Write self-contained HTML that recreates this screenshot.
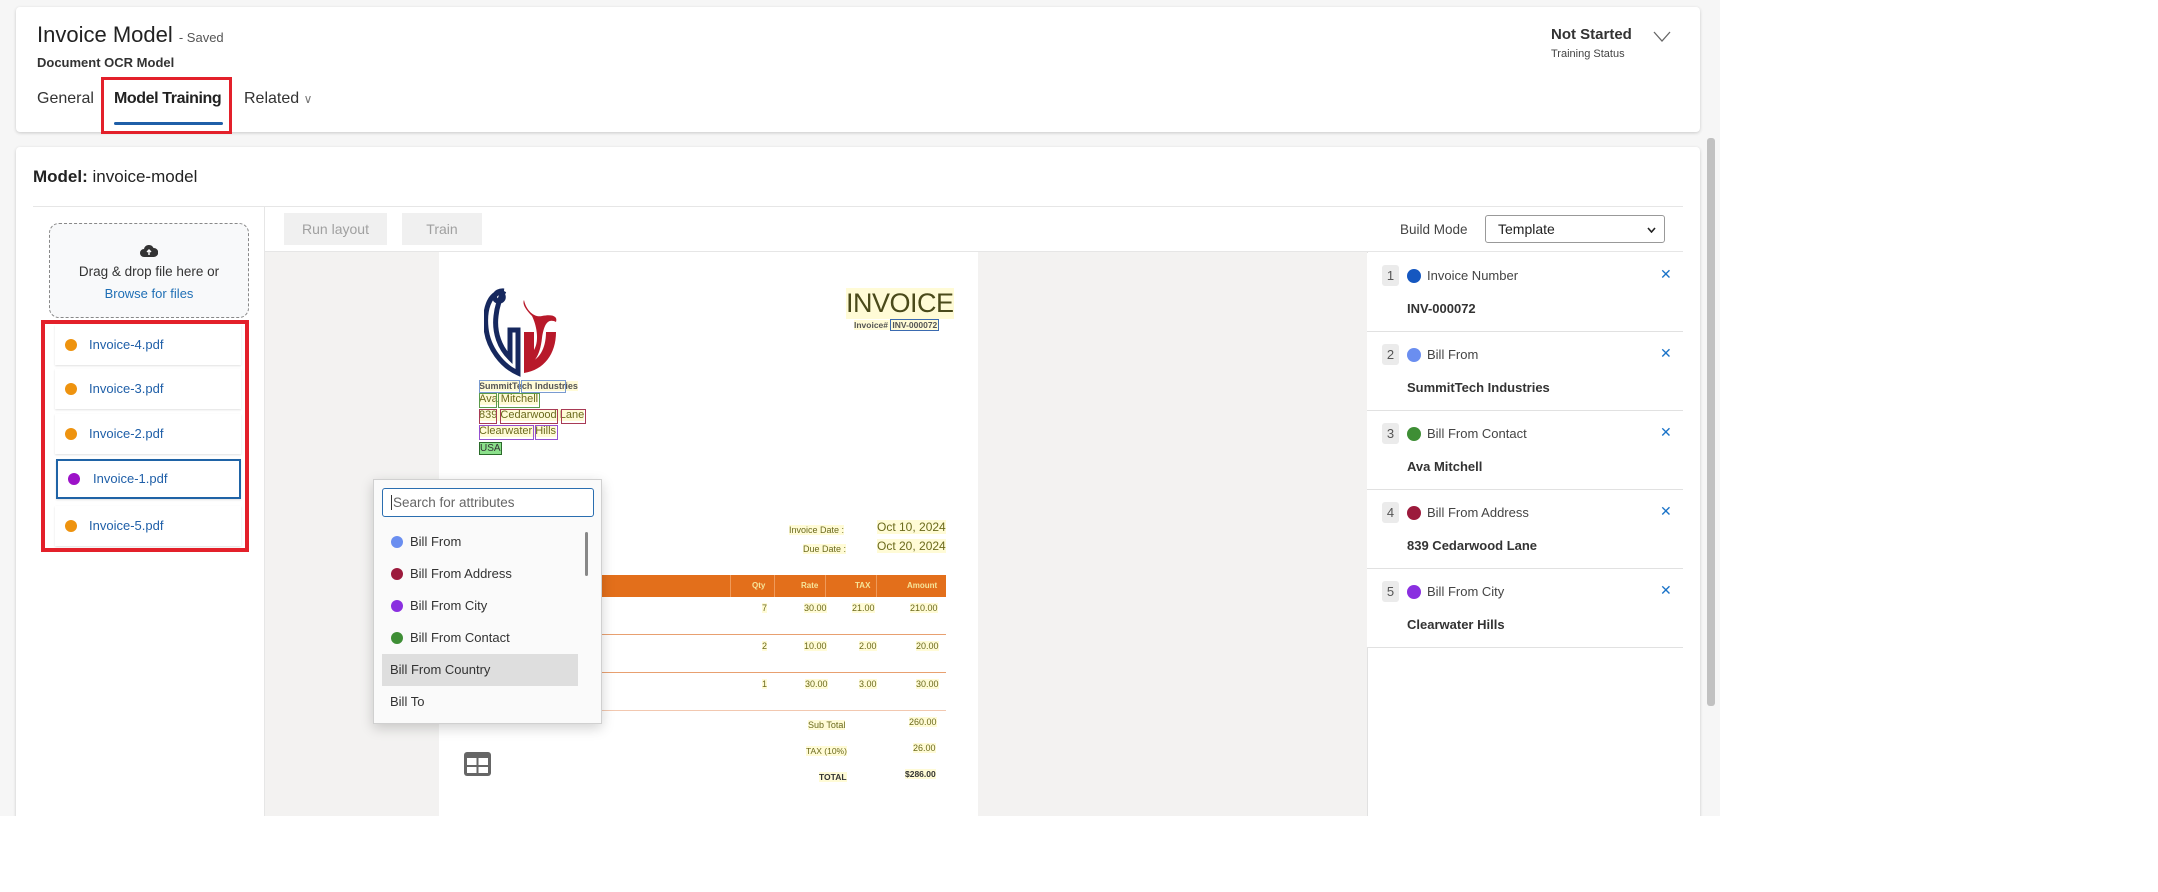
<!DOCTYPE html>
<html><head><meta charset="utf-8"><style>
*{box-sizing:border-box;margin:0;padding:0}
body{width:2158px;height:892px;background:#fff;font-family:"Liberation Sans",sans-serif;position:relative;overflow:hidden;color:#242424}
.a{position:absolute}
#clip{position:absolute;left:0;top:0;width:1720px;height:816px;overflow:hidden;background:#f6f6f6}
.card{background:#fff;border-radius:4px;box-shadow:0 1px 3px rgba(0,0,0,.18)}
.fi{position:absolute;left:55px;width:186px;height:40px;background:#fff;box-shadow:0 1px 2px rgba(0,0,0,.12);font-size:13px;color:#1f5fa8;line-height:40px;padding-left:34px}
.fi i{position:absolute;left:10px;top:14px;width:12px;height:12px;border-radius:50%;background:#ee930f}
.row{position:absolute;left:1367px;width:316px;height:79px;border-bottom:1px solid #e1e1e1;background:#fff}
.row .n{position:absolute;left:15px;top:12px;width:17px;height:21px;background:#ebebeb;border-radius:3px;font-size:13px;text-align:center;line-height:21px;color:#555}
.row .d{position:absolute;left:40px;top:16px;width:14px;height:14px;border-radius:50%}
.row .l{position:absolute;left:60px;top:15px;font-size:13px;color:#444}
.row .v{position:absolute;left:40px;top:48px;font-size:13px;font-weight:bold;color:#333}
.row .x{position:absolute;left:293px;top:13px;font-size:14px;color:#1a73c8}
.dd{position:absolute;left:382px;width:196px;height:32px;font-size:13px;color:#333;line-height:32px;padding-left:28px}
.dd i{position:absolute;left:9px;top:10px;width:12px;height:12px;border-radius:50%}
.t{position:absolute;color:#6b6a1c;font-family:"Liberation Sans",sans-serif;background:#fffbd6}
.bx{position:absolute;border:1.5px solid;height:13px}
</style></head><body>
<div id="clip">
<div class="a" style="left:1707px;top:138px;width:8px;height:568px;background:#c1c1c1;border-radius:3px"></div>
<!-- top card -->
<div class="a card" style="left:16px;top:7px;width:1684px;height:125px"></div>
<div class="a" style="left:37px;top:22px;font-size:22px;color:#222">Invoice Model <span style="font-size:13px;color:#555">- Saved</span></div>
<div class="a" style="left:37px;top:55px;font-size:13px;font-weight:bold;color:#333">Document OCR Model</div>
<div class="a" style="left:37px;top:90px;font-size:16px;color:#333">General</div>
<div class="a" style="left:114px;top:90px;font-size:16px;color:#222;font-weight:bold;letter-spacing:-.4px">Model Training</div>
<div class="a" style="left:244px;top:90px;font-size:16px;color:#333">Related <span style="font-size:12px;color:#777">&#8744;</span></div>
<div class="a" style="left:114px;top:122px;width:109px;height:3px;background:#1f5fa8;border-radius:2px"></div>
<div class="a" style="left:101px;top:77px;width:131px;height:57px;border:3px solid #e3202a"></div>
<div class="a" style="left:1551px;top:26px;font-size:15px;font-weight:bold;color:#333">Not Started</div>
<div class="a" style="left:1551px;top:48px;font-size:11px;color:#444">Training Status</div>
<svg class="a" style="left:1652px;top:30px" width="20" height="14"><path d="M2 2 L10 11 L18 2" fill="none" stroke="#666" stroke-width="1.3"/></svg>
<!-- main card -->
<div class="a card" style="left:16px;top:147px;width:1684px;height:720px"></div>
<div class="a" style="left:33px;top:167px;font-size:17px;color:#222"><span style="font-weight:600">Model:</span> <span style="font-size:17px">invoice-model</span></div>
<div class="a" style="left:33px;top:206px;width:1650px;height:1px;background:#e6e6e6"></div>
<div class="a" style="left:264px;top:207px;width:1px;height:610px;background:#e6e6e6"></div>
<!-- dropzone -->
<div class="a" style="left:49px;top:223px;width:200px;height:95px;border:1px dashed #888;border-radius:10px;background:#f8f9fa"></div>
<svg class="a" style="left:140px;top:244px" width="18" height="14" viewBox="0 0 18 14"><path d="M4 13 A4 4 0 0 1 4 5 A5 5 0 0 1 13.5 4 A4.5 4.5 0 0 1 14 13 Z" fill="#333"/><path d="M9 11 V6 M7 8 L9 6 L11 8" stroke="#fff" stroke-width="1.4" fill="none"/></svg>
<div class="a" style="left:49px;top:264px;width:200px;text-align:center;font-size:13.5px;color:#333">Drag &amp; drop file here or</div>
<div class="a" style="left:49px;top:286px;width:200px;text-align:center;font-size:13px;color:#1f6fb5">Browse for files</div>
<div class="fi" style="top:325px"><i></i>Invoice-4.pdf</div>
<div class="fi" style="top:369px"><i></i>Invoice-3.pdf</div>
<div class="fi" style="top:414px"><i></i>Invoice-2.pdf</div>
<div class="fi" style="top:459px;border:2px solid #1f63a6;line-height:36px;left:56px;width:185px;padding-left:35px"><i style="background:#9c12c8;top:12px"></i>Invoice-1.pdf</div>
<div class="fi" style="top:506px"><i></i>Invoice-5.pdf</div>
<div class="a" style="left:41px;top:320px;width:208px;height:232px;border:4px solid #e3202a"></div>
<!-- toolbar -->
<div class="a" style="left:284px;top:213px;width:103px;height:32px;background:#f0f0f0;font-size:14px;color:#a0a0a0;text-align:center;line-height:32px">Run layout</div>
<div class="a" style="left:402px;top:213px;width:80px;height:32px;background:#f0f0f0;font-size:14px;color:#a0a0a0;text-align:center;line-height:32px">Train</div>
<div class="a" style="left:1400px;top:222px;font-size:13.5px;color:#444">Build Mode</div>
<div class="a" style="left:1485px;top:215px;width:180px;height:28px;border:1px solid #999;border-radius:3px;font-size:14px;color:#222;padding:5px 0 0 12px">Template<svg style="position:absolute;right:8px;top:11px" width="9" height="6"><path d="M1 1 L4.5 5 L8 1" stroke="#222" stroke-width="1.6" fill="none"/></svg></div>
<div class="a" style="left:265px;top:251px;width:1418px;height:1px;background:#e6e6e6"></div>
<!-- viewer -->
<div class="a" style="left:265px;top:252px;width:1102px;height:564px;background:#f3f2f1"></div>
<div class="a" style="left:439px;top:252px;width:539px;height:564px;background:#fff"></div>
<!-- logo -->
<svg class="a" style="left:484px;top:288px" width="90" height="90" viewBox="0 0 90 90">
<path d="M20 3 C10 2 8 12 14 13 C22 14 20 3 14 5 C6 8 0 20 2 40 C4 60 18 78 34 85 L34 42 L26 42 L26 70 C16 60 10 45 12 28 C13 18 16 10 20 3" fill="none" stroke="#16285e" stroke-width="5"/>
<path d="M40 12 C42 22 50 30 58 28 C68 26 74 28 72 34 C64 30 60 36 58 50 C56 68 50 76 40 80 L40 44 L50 44 L50 62 C56 52 52 36 48 28 C42 22 38 16 40 12 Z" fill="#b8192a"/>
<path d="M40 44 L40 85 C60 82 72 66 72 44 L62 44 C62 62 54 72 46 74 L46 44 Z" fill="#b8192a"/>
</svg>
<!-- address boxes -->
<div class="t" style="left:479px;top:381px;font-size:9px;font-weight:bold;color:#555">SummitTech Industries</div>
<div class="bx" style="left:479px;top:380px;width:41px;border-color:#7a9bd0"></div><div class="bx" style="left:521px;top:380px;width:45px;border-color:#7a9bd0"></div>
<div class="t" style="left:479px;top:393px;font-size:11px">Ava Mitchell</div>
<div class="bx" style="left:479px;top:393px;width:18px;height:15px;border-color:#5a9a4a"></div><div class="bx" style="left:498px;top:393px;width:42px;height:15px;border-color:#5a9a4a"></div>
<div class="t" style="left:479px;top:409px;font-size:11px">839 Cedarwood Lane</div>
<div class="bx" style="left:479px;top:409px;width:18px;height:15px;border-color:#a83a55"></div><div class="bx" style="left:500px;top:409px;width:58px;height:15px;border-color:#a83a55"></div><div class="bx" style="left:561px;top:409px;width:25px;height:15px;border-color:#a83a55"></div>
<div class="t" style="left:479px;top:425px;font-size:11px">Clearwater Hills</div>
<div class="bx" style="left:479px;top:425px;width:55px;height:15px;border-color:#9550d0"></div><div class="bx" style="left:535px;top:425px;width:23px;height:15px;border-color:#9550d0"></div>
<div class="t" style="left:479px;top:442px;font-size:10px;background:#8be08b;color:#333;border:1px solid #2a6a2a">USA</div>
<div class="t" style="left:846px;top:288px;font-size:27px;color:#4a4a1a;letter-spacing:-.5px">INVOICE</div>
<div class="t" style="left:854px;top:320px;font-size:8.5px;font-weight:bold;color:#555">Invoice# <span style="border:1.5px solid #3a6ab0;padding:0 1px">INV-000072</span></div>
<div class="t" style="left:789px;top:525px;font-size:9px">Invoice Date :</div>
<div class="t" style="left:803px;top:544px;font-size:9px">Due Date :</div>
<div class="t" style="left:877px;top:520px;font-size:12px">Oct 10, 2024</div>
<div class="t" style="left:877px;top:539px;font-size:12px">Oct 20, 2024</div>
<div class="a" style="left:439px;top:575px;width:507px;height:22px;background:#e36f1b"></div>
<div class="a" style="left:730px;top:575px;width:1px;height:22px;background:#ef9a5a"></div>
<div class="a" style="left:774px;top:575px;width:1px;height:22px;background:#ef9a5a"></div>
<div class="a" style="left:825px;top:575px;width:1px;height:22px;background:#ef9a5a"></div>
<div class="a" style="left:876px;top:575px;width:1px;height:22px;background:#ef9a5a"></div>
<div class="a" style="left:752px;top:581px;font-size:8px;color:#f6e59a;font-weight:bold">Qty</div>
<div class="a" style="left:801px;top:581px;font-size:8px;color:#f6e59a;font-weight:bold">Rate</div>
<div class="a" style="left:855px;top:581px;font-size:8px;color:#f6e59a;font-weight:bold">TAX</div>
<div class="a" style="left:907px;top:581px;font-size:8px;color:#f6e59a;font-weight:bold">Amount</div>
<div class="a" style="left:439px;top:634px;width:507px;height:1px;background:#e8a070"></div>
<div class="a" style="left:439px;top:672px;width:507px;height:1px;background:#e8a070"></div>
<div class="a" style="left:439px;top:710px;width:507px;height:1px;background:#f2c8b0"></div>
<div class="t" style="left:762px;top:603px;font-size:9px">7</div><div class="t" style="left:804px;top:603px;font-size:9px">30.00</div><div class="t" style="left:852px;top:603px;font-size:9px">21.00</div><div class="t" style="left:910px;top:603px;font-size:9px">210.00</div>
<div class="t" style="left:762px;top:641px;font-size:9px">2</div><div class="t" style="left:804px;top:641px;font-size:9px">10.00</div><div class="t" style="left:859px;top:641px;font-size:9px">2.00</div><div class="t" style="left:916px;top:641px;font-size:9px">20.00</div>
<div class="t" style="left:762px;top:679px;font-size:9px">1</div><div class="t" style="left:805px;top:679px;font-size:9px">30.00</div><div class="t" style="left:859px;top:679px;font-size:9px">3.00</div><div class="t" style="left:916px;top:679px;font-size:9px">30.00</div>
<div class="t" style="left:808px;top:720px;font-size:9px">Sub Total</div><div class="t" style="left:909px;top:717px;font-size:9px">260.00</div>
<div class="t" style="left:806px;top:746px;font-size:8.5px">TAX (10%)</div><div class="t" style="left:913px;top:743px;font-size:9px">26.00</div>
<div class="t" style="left:819px;top:772px;font-size:8.5px;font-weight:bold;color:#333">TOTAL</div><div class="t" style="left:905px;top:769px;font-size:8.5px;font-weight:bold;color:#333">$286.00</div>
<svg class="a" style="left:464px;top:752px" width="27" height="24" viewBox="0 0 27 24"><rect x="0" y="0" width="27" height="24" rx="3" fill="#666"/><rect x="3" y="6" width="9.5" height="7" fill="#fff"/><rect x="14.5" y="6" width="9.5" height="7" fill="#fff"/><rect x="3" y="15" width="9.5" height="6" fill="#fff"/><rect x="14.5" y="15" width="9.5" height="6" fill="#fff"/></svg>
<!-- right panel -->
<div class="a" style="left:1367px;top:252px;width:1px;height:564px;background:#e1e1e1"></div>
<div class="row" style="top:253px"><div class="n">1</div><div class="d" style="background:#1557c0"></div><div class="l">Invoice Number</div><div class="v">INV-000072</div><div class="x">✕</div></div>
<div class="row" style="top:332px"><div class="n">2</div><div class="d" style="background:#6a8ef0"></div><div class="l">Bill From</div><div class="v">SummitTech Industries</div><div class="x">✕</div></div>
<div class="row" style="top:411px"><div class="n">3</div><div class="d" style="background:#3e8e35"></div><div class="l">Bill From Contact</div><div class="v">Ava Mitchell</div><div class="x">✕</div></div>
<div class="row" style="top:490px"><div class="n">4</div><div class="d" style="background:#9c1a3c"></div><div class="l">Bill From Address</div><div class="v">839 Cedarwood Lane</div><div class="x">✕</div></div>
<div class="row" style="top:569px"><div class="n">5</div><div class="d" style="background:#8a2fe0"></div><div class="l">Bill From City</div><div class="v">Clearwater Hills</div><div class="x">✕</div></div>
<!-- dropdown -->
<div class="a" style="left:373px;top:479px;width:229px;height:245px;background:#fafafa;border:1px solid #d0d0d0;box-shadow:0 4px 12px rgba(0,0,0,.18)"></div>
<div class="a" style="left:382px;top:488px;width:212px;height:29px;border:1px solid #2a6eb0;border-radius:3px;background:#fff;font-size:13.5px;color:#666;padding:6px 0 0 8px"><span style="border-left:1px solid #333;padding-left:1px">Search for attributes</span></div>
<div class="a" style="left:585px;top:532px;width:3px;height:44px;background:#888;border-radius:2px"></div>
<div class="dd" style="top:526px"><i style="background:#6a8ef0"></i>Bill From</div>
<div class="dd" style="top:558px"><i style="background:#9c1a3c"></i>Bill From Address</div>
<div class="dd" style="top:590px"><i style="background:#8a2fe0"></i>Bill From City</div>
<div class="dd" style="top:622px"><i style="background:#3e8e35"></i>Bill From Contact</div>
<div class="dd" style="top:654px;background:#dedede;padding-left:8px">Bill From Country</div>
<div class="dd" style="top:686px;padding-left:8px">Bill To</div>
</div>
</body></html>
